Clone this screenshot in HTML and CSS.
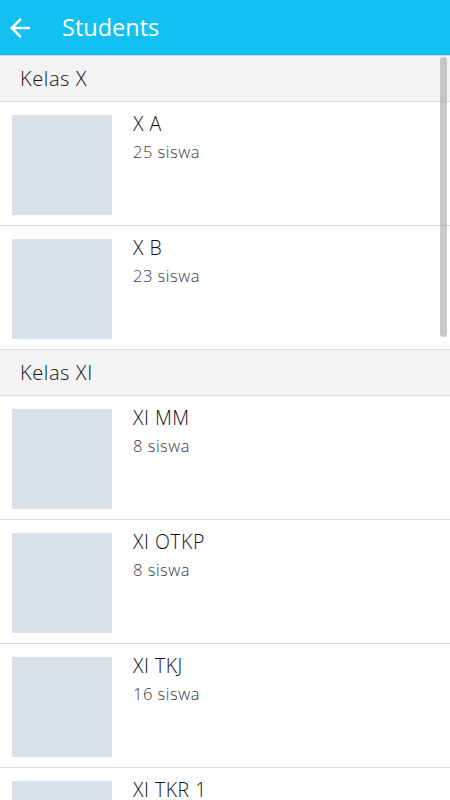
FILE: index.html
```html
<!DOCTYPE html>
<html>
<head>
<meta charset="utf-8">
<link rel="stylesheet" href="styles.css">
</head>
<body>
<div class="app">
  <header class="toolbar">
    <svg class="back" width="30" height="30" viewBox="0 0 24 24"><path d="M20 11H7.83l5.59-5.59L12 4l-8 8 8 8 1.41-1.41L7.83 13H20v-2z" fill="#fff"/></svg>
    <h1 class="title">Students</h1>
  </header>
  <main class="list">
    <div class="section">Kelas X</div>
    <div class="item"><div class="thumb"></div><div class="info"><div class="name">X A</div><div class="count">25 siswa</div></div></div>
    <div class="item"><div class="thumb"></div><div class="info"><div class="name">X B</div><div class="count">23 siswa</div></div></div>
    <div class="section">Kelas XI</div>
    <div class="item"><div class="thumb"></div><div class="info"><div class="name">XI MM</div><div class="count">8 siswa</div></div></div>
    <div class="item"><div class="thumb"></div><div class="info"><div class="name">XI OTKP</div><div class="count">8 siswa</div></div></div>
    <div class="item"><div class="thumb"></div><div class="info"><div class="name">XI TKJ</div><div class="count">16 siswa</div></div></div>
    <div class="item"><div class="thumb"></div><div class="info"><div class="name">XI TKR 1</div></div></div>
    <div class="scrollbar"></div>
  </main>
</div>
</body>
</html>
```
FILE: styles.css
```css
* { box-sizing: border-box; }
html, body { margin: 0; padding: 0; }
body {
  width: 450px;
  height: 800px;
  overflow: hidden;
  background: #fff;
  font-family: "Open Sans", "Lato", sans-serif;
}
.app { display: flex; flex-direction: column; height: 800px; }
.toolbar {
  height: 56px;
  flex: none;
  background: #12c0f2;
  display: flex;
  align-items: center;
  padding-left: 5px;
  border-bottom: 1px solid #d6d6d6;
  position: relative;
  z-index: 2;
}
.back { width: 30px; height: 30px; flex: none; }
.title {
  margin: 0 0 0 27px;
  color: #fff;
  font-size: 23.5px;
  line-height: 55px;
  font-weight: 400;
}
.list { position: relative; flex: 1; overflow: hidden; }
.section {
  height: 46px;
  background: #f4f4f4;
  border-bottom: 1px solid #dcdcdc;
  padding-left: 20px;
  font-size: 20px;
  line-height: 45px;
  font-weight: 300;
  letter-spacing: 0.6px;
  color: #111;
}
.item {
  height: 124px;
  display: flex;
  align-items: flex-start;
  padding: 13px 0 0 12px;
  border-bottom: 1px solid #dcdcdc;
}
.thumb { width: 100px; height: 100px; background: #d9e0e7; flex: none; }
.info { margin-left: 21px; margin-top: -1px; }
.name { font-size: 19.5px; color: #111; line-height: 20px; font-weight: 300; letter-spacing: 0.5px; }
.count { font-size: 16.5px; color: #3a3a3a; margin-top: 8px; line-height: 20px; font-weight: 300; letter-spacing: 0.5px; }
.scrollbar {
  position: absolute;
  top: 1px;
  right: 3px;
  width: 7px;
  height: 280px;
  border-radius: 4px;
  background: rgba(150,150,150,0.5);
}
```
